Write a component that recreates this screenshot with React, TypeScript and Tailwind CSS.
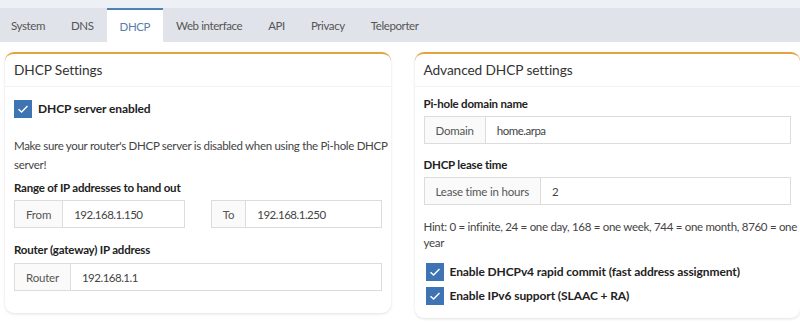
import React from "react";

const tabs = ["System", "DNS", "DHCP", "Web interface", "API", "Privacy", "Teleporter"];

function Check({ label }: { label: string }) {
  return (
    <label className="flex items-center gap-[6px]">
      <span className="flex h-[18px] w-[18px] items-center justify-center bg-[#3e74b4]">
        <svg width="12" height="10" viewBox="0 0 12 10" fill="none">
          <path d="M1.5 5.2 L4.6 8 L10.5 2" stroke="#fff" strokeWidth="1.4" />
        </svg>
      </span>
      <span className="text-[12px] font-bold tracking-[-0.1px] text-[#222]">{label}</span>
    </label>
  );
}

function Field({ addon, value, className = "" }: { addon: string; value: string; className?: string }) {
  return (
    <div className={"flex h-[28px] border border-[#dcdcdc] " + className}>
      <span className="flex items-center border-r border-[#dcdcdc] bg-[#fafafa] px-[11px] text-[#555]">{addon}</span>
      <span className="flex flex-1 items-center px-[11px] tracking-[-0.5px] text-[#444]">{value}</span>
    </div>
  );
}

function Card({ title, className = "", children }: { title: string; className?: string; children: React.ReactNode }) {
  return (
    <div className="flex-1 rounded-[9px] border-t-[2px] border-[#e2a442] bg-white shadow-[0_1px_3px_rgba(0,0,0,0.12)]">
      <div className="border-b border-[#f2f2f2] px-[9px] pb-[7px] pt-[7px] text-[13.7px] leading-[18px] tracking-[-0.1px] text-[#333]">
        {title}
      </div>
      <div className={"px-[9px] " + className}>{children}</div>
    </div>
  );
}

export default function App() {
  return (
    <div className="h-[323px] w-[800px] overflow-hidden bg-white text-[11.5px] leading-[19px] tracking-[-0.2px] font-['Lato','Noto_Sans',sans-serif]">
      <div className="h-[8px] bg-[#edf0f4]" />
      <div className="flex h-[34px] bg-[#e0e4ea]">
        {tabs.map((t, i) => (
          <div
            key={t}
            className={
              "flex items-center px-[13px] text-[11.5px] tracking-[-0.4px] " +
              (i === 0 ? "pl-[11px] " : "") +
              (t === "DHCP" ? "border-t-[2px] border-[#4a85b5] bg-white text-[#5a7fa8]" : "text-[#555]")
            }
          >
            {t}
          </div>
        ))}
      </div>
      <div className="flex items-start gap-[24px] pl-[5px] pt-[10px]">
        <Card title="DHCP Settings" className="pb-[22px]">
          <div className="pt-[12px]">
            <Check label="DHCP server enabled" />
          </div>
          <p className="-mr-[8px] mt-[18px] tracking-[-0.3px] text-[#444]">
            Make sure your router's DHCP server is disabled when using the Pi-hole DHCP server!
          </p>
          <div className="mt-[4px] font-bold text-[#222]">Range of IP addresses to hand out</div>
          <div className="mt-[3px] flex gap-[26px]">
            <Field addon="From" value="192.168.1.150" className="flex-1" />
            <Field addon="To" value="192.168.1.250" className="flex-1" />
          </div>
          <div className="mt-[12px] font-bold text-[#222]">Router (gateway) IP address</div>
          <Field addon="Router" value="192.168.1.1" className="mt-[4px]" />
        </Card>
        <Card title="Advanced DHCP settings" className="pb-[13px]">
          <div className="pt-[7px] font-bold text-[#222]">Pi-hole domain name</div>
          <Field addon="Domain" value="home.arpa" className="mt-[3px]" />
          <div className="mt-[11px] font-bold text-[#222]">DHCP lease time</div>
          <Field addon="Lease time in hours" value="2" className="mt-[3px]" />
          <p className="-mr-[8px] mt-[14px] leading-[16px] tracking-[-0.3px] text-[#444]">
            Hint: 0 = infinite, 24 = one day, 168 = one week, 744 = one month, 8760 = one year
          </p>
          <div className="mt-[11px] flex flex-col gap-[5px] pl-[2px]">
            <Check label="Enable DHCPv4 rapid commit (fast address assignment)" />
            <Check label="Enable IPv6 support (SLAAC + RA)" />
          </div>
        </Card>
      </div>
    </div>
  );
}
